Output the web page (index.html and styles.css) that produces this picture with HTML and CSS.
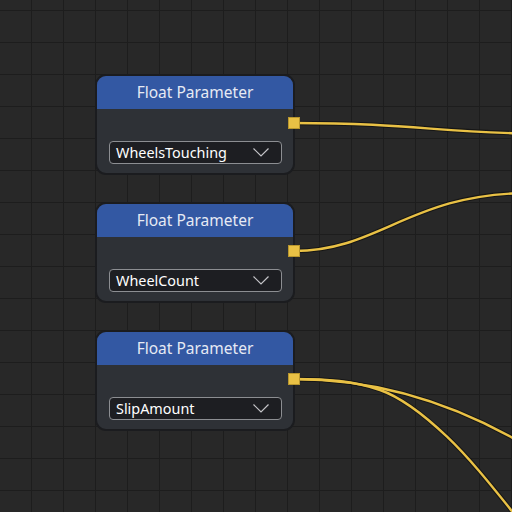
FILE: index.html
```html
<!DOCTYPE html>
<html lang="en">
<head>
    <meta charset="UTF-8"/>
    <meta name="viewport" content="width=device-width,initial-scale=1"/>
    <title>Parameter graph</title>
    <link rel="stylesheet" href="styles.css">
</head>
<body>
<div class="graph">
    <!-- links between the output ports and nodes further right -->
    <svg class="wires" width="512" height="512" viewBox="0 0 512 512">
        <g class="wire-edge">
            <path d="M294,123 C420,123 440,134 560,134"/>
            <path d="M294,251 C380,251 410,193 530,193"/>
            <path d="M294,379 Q410,379 520,442"/>
            <path d="M294,379 C326.7,379 353.3,380.7 380,390 C402.3,397.8 424.7,415.5 447,436.7 C469.7,458.2 492.3,486.7 515,515"/>
        </g>
        <g class="wire">
            <path d="M294,123 C420,123 440,134 560,134"/>
            <path d="M294,251 C380,251 410,193 530,193"/>
            <path d="M294,379 Q410,379 520,442"/>
            <path d="M294,379 C326.7,379 353.3,380.7 380,390 C402.3,397.8 424.7,415.5 447,436.7 C469.7,458.2 492.3,486.7 515,515"/>
        </g>
    </svg>

    <div class="nodes">
        <div class="node">
            <div class="node-title">Float Parameter</div>
            <div class="node-body">
                <div class="select">
                    <span>WheelsTouching</span>
                    <svg class="chevron" width="16" height="9" viewBox="0 0 16 9"><path d="M0.5,0.5 L8,8 L15.5,0.5"/></svg>
                </div>
            </div>
            <span class="port"></span>
        </div>
        <div class="node">
            <div class="node-title">Float Parameter</div>
            <div class="node-body">
                <div class="select">
                    <span>WheelCount</span>
                    <svg class="chevron" width="16" height="9" viewBox="0 0 16 9"><path d="M0.5,0.5 L8,8 L15.5,0.5"/></svg>
                </div>
            </div>
            <span class="port"></span>
        </div>
        <div class="node">
            <div class="node-title">Float Parameter</div>
            <div class="node-body">
                <div class="select">
                    <span>SlipAmount</span>
                    <svg class="chevron" width="16" height="9" viewBox="0 0 16 9"><path d="M0.5,0.5 L8,8 L15.5,0.5"/></svg>
                </div>
            </div>
            <span class="port"></span>
        </div>
    </div>
</div>
</body>
</html>
```

FILE: styles.css
```css
body { margin: 0; background: #282828; font-family: "Noto Sans", "Open Sans", sans-serif; }

.graph {
    position: relative;
    width: 512px; height: 512px; overflow: hidden;
    background-color: #282828;
    background-image:
        linear-gradient(to right, #1d1d1d 1px, transparent 1px),
        linear-gradient(to bottom, #1d1d1d 1px, transparent 1px);
    background-size: 32px 32px;
    background-position: 31px 10px;
}

.wires { position: absolute; left: 0; top: 0; }
.wires path { fill: none; stroke-linecap: round; }
.wire-edge path { stroke: #161616; stroke-width: 4.5; }
.wire path { stroke: #e9c145; stroke-width: 2.4; }

.nodes {
    position: relative;
    display: flex; flex-direction: column; gap: 27px;
    padding: 74px 0 0 95px;
}

.node {
    position: relative;
    width: 196px;
    border: 2px solid #1b1c1f;
    border-radius: 11px;
    background: #2e3136;
}
.node-title {
    height: 33px; line-height: 33px;
    text-align: center;
    background: #3358a3;
    border-radius: 9px 9px 0 0;
    color: #e6eaf4; font-size: 15.5px;
}
.node-body { padding: 32px 11px 9px 12px; }

.select {
    display: flex; align-items: center; justify-content: space-between;
    height: 21px;
    padding: 0 12px 0 6px;
    border: 1px solid #8c8e92;
    border-radius: 4px;
    background: #1d1e22;
    color: #ffffff; font-size: 14.4px; line-height: 20px;
}
.chevron path { fill: none; stroke: #c4c4c8; stroke-width: 1.2; }

.port {
    position: absolute; right: -7px; top: 41px;
    width: 12px; height: 12px;
    box-sizing: border-box;
    background: #e9c145;
    border: 1px solid #b8962e;
}
```
